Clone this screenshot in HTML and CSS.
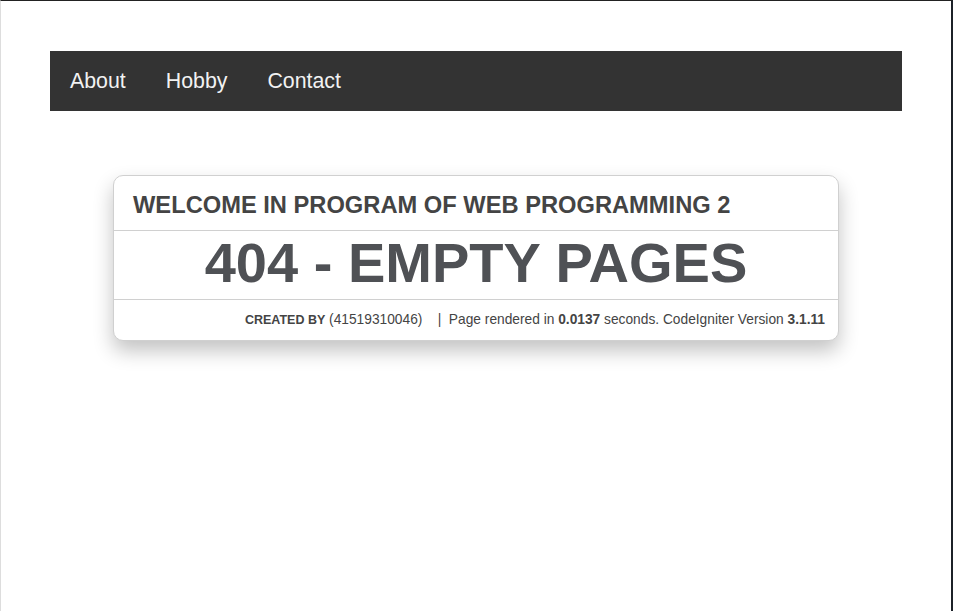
FILE: index.html
```html
<!DOCTYPE html>
<html>
<head>
<meta charset="utf-8">
<title>404 - Empty Pages</title>
<link rel="stylesheet" href="styles.css">
</head>
<body>
<div class="frame">
  <nav class="topnav">
    <a href="#">About</a>
    <a href="#">Hobby</a>
    <a href="#">Contact</a>
  </nav>
  <div class="card">
    <h1 class="card-title">WELCOME IN PROGRAM OF WEB PROGRAMMING 2</h1>
    <div class="card-body">404 - EMPTY PAGES</div>
    <p class="card-footer"><span class="created">CREATED BY</span> (41519310046) &nbsp;&nbsp; | &nbsp;Page rendered in <strong>0.0137</strong> seconds. CodeIgniter Version <strong>3.1.11</strong></p>
  </div>
</div>
</body>
</html>
```
FILE: styles.css
```css
html, body {
  margin: 0;
  padding: 0;
  background: #fff;
}
body {
  font-family: "Liberation Sans", Arial, sans-serif;
}
.frame {
  box-sizing: border-box;
  height: 611px;
  border-top: 1px solid #222;
  border-left: 1px solid #ddd;
  border-right: 2px solid #1c2128;
  padding: 50px 49px 0 49px;
}
.topnav {
  display: flex;
  height: 60px;
  align-items: center;
  background: #333;
  padding: 0;
}
.topnav a {
  color: #f2f2f2;
  text-decoration: none;
  font-size: 21.33px;
  padding: 0 20px;
  line-height: 60px;
}
.card {
  margin: 64px 63px 0 63px;
  border: 1px solid #d0d0d0;
  border-radius: 10px;
  background: #fff;
  box-shadow: 0 10px 20px rgba(0, 0, 0, 0.24);
  color: #444;
}
.card-title {
  margin: 0;
  font-size: 23.7px;
  font-weight: bold;
  color: #444;
  height: 54px;
  line-height: 58px;
  padding: 0 19px;
  border-bottom: 1px solid #d0d0d0;
  overflow: hidden;
}
.card-body {
  height: 68px;
  line-height: 63px;
  text-align: center;
  font-size: 56px;
  font-weight: bold;
  color: #4f5155;
  border-bottom: 1px solid #d0d0d0;
}
.card-footer {
  margin: 0;
  height: 40px;
  line-height: 39px;
  text-align: right;
  font-size: 13.75px;
  color: #444;
  padding: 0 13px;
}
.card-footer .created {
  font-size: 12.5px;
  font-weight: bold;
}
```
